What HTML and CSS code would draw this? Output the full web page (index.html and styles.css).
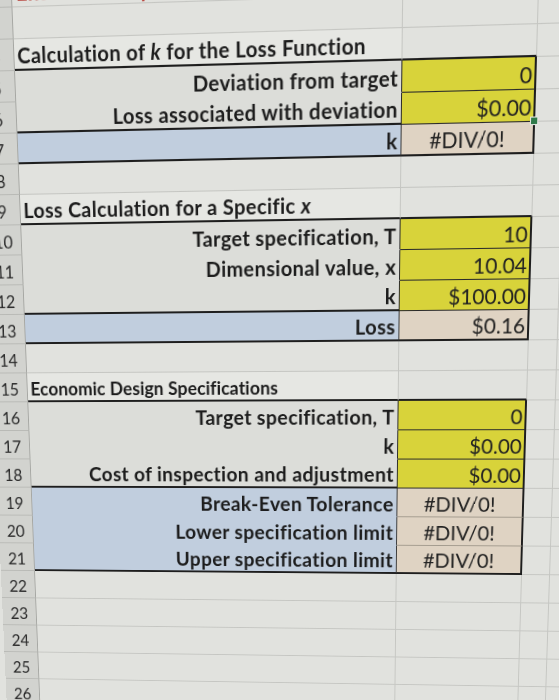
FILE: index.html
```html
<!DOCTYPE html>
<html lang="en">
<head>
<meta charset="utf-8">
<title>Loss Function Worksheet</title>
<link rel="stylesheet" href="styles.css">
</head>
<body>
<div class="sheet">
  <div class="row short"><div class="rh">2</div><div class="lab note"><span>Enter data in yellow cells</span></div><div class="val"></div><div class="ext"></div></div>
  <div class="row"><div class="rh">3</div><div class="lab"></div><div class="val"></div><div class="ext"></div></div>
  <div class="row"><div class="rh">4</div><div class="lab ttl"><span>Calculation of <i>k</i> for the Loss Function</span></div><div class="val vtop"></div><div class="ext"></div></div>
  <div class="row"><div class="rh">5</div><div class="lab fill"><span>Deviation from target</span></div><div class="val yel">0</div><div class="ext"></div></div>
  <div class="row"><div class="rh">6</div><div class="lab fill sep"><span>Loss associated with deviation</span></div><div class="val yel sel">$0.00</div><div class="ext"></div></div>
  <div class="row"><div class="rh">7</div><div class="lab blue last"><span>k</span></div><div class="val peach last ctr">#DIV/0!</div><div class="ext"></div></div>
  <div class="row"><div class="rh">8</div><div class="lab"></div><div class="val"></div><div class="ext"></div></div>
  <div class="row"><div class="rh">9</div><div class="lab ttl"><span>Loss Calculation for a Specific <i>x</i></span></div><div class="val vtop"></div><div class="ext"></div></div>
  <div class="row"><div class="rh">10</div><div class="lab fill"><span>Target specification, T</span></div><div class="val yel">10</div><div class="ext"></div></div>
  <div class="row"><div class="rh">11</div><div class="lab fill"><span>Dimensional value, x</span></div><div class="val yel">10.04</div><div class="ext"></div></div>
  <div class="row"><div class="rh">12</div><div class="lab fill sep"><span>k</span></div><div class="val yel">$100.00</div><div class="ext"></div></div>
  <div class="row"><div class="rh">13</div><div class="lab blue last"><span>Loss</span></div><div class="val peach last">$0.16</div><div class="ext"></div></div>
  <div class="row"><div class="rh">14</div><div class="lab"></div><div class="val"></div><div class="ext"></div></div>
  <div class="row"><div class="rh">15</div><div class="lab ttl plain"><span>Economic Design Specifications</span></div><div class="val vtop"></div><div class="ext"></div></div>
  <div class="row"><div class="rh">16</div><div class="lab fill"><span>Target specification, T</span></div><div class="val yel">0</div><div class="ext"></div></div>
  <div class="row"><div class="rh">17</div><div class="lab fill"><span>k</span></div><div class="val yel">$0.00</div><div class="ext"></div></div>
  <div class="row"><div class="rh">18</div><div class="lab fill sep"><span>Cost of inspection and adjustment</span></div><div class="val yel">$0.00</div><div class="ext"></div></div>
  <div class="row"><div class="rh">19</div><div class="lab blue"><span>Break-Even Tolerance</span></div><div class="val peach ctr">#DIV/0!</div><div class="ext"></div></div>
  <div class="row"><div class="rh">20</div><div class="lab blue"><span>Lower specification limit</span></div><div class="val peach ctr">#DIV/0!</div><div class="ext"></div></div>
  <div class="row"><div class="rh">21</div><div class="lab blue last"><span>Upper specification limit</span></div><div class="val peach last ctr">#DIV/0!</div><div class="ext"></div></div>
  <div class="row"><div class="rh">22</div><div class="lab"></div><div class="val"></div><div class="ext"></div></div>
  <div class="row"><div class="rh">23</div><div class="lab"></div><div class="val"></div><div class="ext"></div></div>
  <div class="row"><div class="rh">24</div><div class="lab"></div><div class="val"></div><div class="ext"></div></div>
  <div class="row"><div class="rh">25</div><div class="lab"></div><div class="val"></div><div class="ext"></div></div>
  <div class="row"><div class="rh">26</div><div class="lab"></div><div class="val"></div><div class="ext"></div></div>
  <div class="row"><div class="rh">27</div><div class="lab"></div><div class="val"></div><div class="ext"></div></div>
</div>
</body>
</html>
```

FILE: styles.css
```css
html, body {
  margin: 0;
  height: 100%;
  overflow: hidden;
  background: #e1e2de;
}
body {
  font-family: Lato, "Liberation Sans", sans-serif;
  color: #1c1c1c;
}
.sheet {
  width: 620px;
  transform-origin: 0 0;
  transform: matrix3d(0.972284, -0.030948, 0, -0.00006822, 0.044466, 1.069092, 0, 0.00014003, 0, 0, 1, 0, -2.6075, -3.808, 0, 1);
}
.row {
  display: flex;
  height: 30px;
}
.row::after {
  content: "";
  flex: 0 0 50px;
  box-sizing: border-box;
  border-right: 1px solid #c5c6c2;
  border-bottom: 1px solid #c5c6c2;
}
.row.short {
  height: 11px;
}
.rh, .lab, .val, .ext {
  box-sizing: border-box;
  flex-shrink: 0;
  white-space: nowrap;
}
.rh {
  flex-basis: 38px;
  margin-left: -23px;
  background: #d2d3cf;
  border-right: 1px solid #a6a7a3;
  border-bottom: 1px solid #b9bab6;
  display: flex;
  align-items: center;
  justify-content: center;
  padding-top: 3px;
  font-size: 17px;
  color: #2a2a2a;
}
.lab {
  flex-basis: 391px;
  border-right: 1px solid #c5c6c2;
  border-bottom: 1px solid #c5c6c2;
  display: flex;
  align-items: flex-end;
  justify-content: flex-end;
  padding: 0 3px 3px;
  font-size: 20.5px;
  font-weight: 700;
  letter-spacing: 0.4px;
  line-height: 1;
}
.val {
  flex-basis: 131px;
  border-right: 1px solid #c5c6c2;
  border-bottom: 1px solid #c5c6c2;
  display: flex;
  align-items: flex-end;
  justify-content: flex-end;
  padding: 0 2px 3px;
  font-size: 21px;
  line-height: 1;
  color: #222;
}
.ext {
  flex-basis: 29px;
  border-right: 1px solid #c5c6c2;
  border-bottom: 1px solid #c5c6c2;
}
.note {
  justify-content: flex-start;
  padding-left: 4px;
  color: #b8463f;
}
.ttl {
  justify-content: flex-start;
  padding-left: 3px;
  border-bottom: 2px solid #1e1e1e;
  background: #e6e7e3;
}
.ttl.plain {
  font-size: 18.5px;
  letter-spacing: 0.1px;
}
.vtop {
  border-bottom: 2px solid #1e1e1e;
}
.fill {
  background: #dcddd9;
  border-bottom-color: #dcddd9;
  border-right: 1px solid #2a2a2a;
}
.blue {
  background: #c1cede;
  border-bottom-color: #c1cede;
  border-right: 1px solid #3a3a3a;
}
.sep, .last {
  border-bottom: 2px solid #1e1e1e;
}
.yel {
  background: #d8d33a;
  border-right: 2px solid #1e1e1e;
  border-bottom: 1px solid #2a2a2a;
}
.peach {
  background: #dfd3c3;
  border-right: 2px solid #1e1e1e;
  border-bottom: 1px solid #a39b8e;
}
.peach.last {
  border-bottom: 2px solid #1e1e1e;
}
.ctr {
  justify-content: center;
  padding-right: 2px;
}
.sel {
  position: relative;
}
.sel::after {
  content: "";
  position: absolute;
  right: -5px;
  bottom: -4px;
  width: 6px;
  height: 6px;
  background: #2f7a4a;
  border: 1px solid #e6e7e3;
}
```
